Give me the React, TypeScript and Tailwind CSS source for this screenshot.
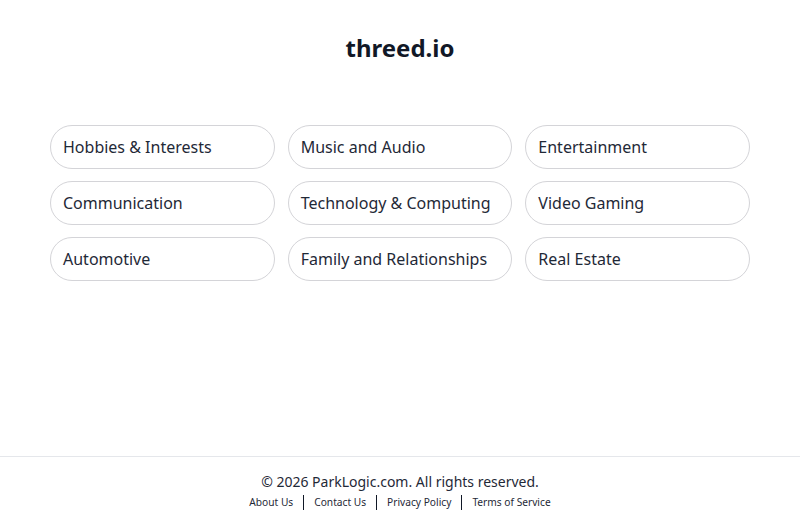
const categories = [
  "Hobbies & Interests",
  "Music and Audio",
  "Entertainment",
  "Communication",
  "Technology & Computing",
  "Video Gaming",
  "Automotive",
  "Family and Relationships",
  "Real Estate",
];

const links = ["About Us", "Contact Us", "Privacy Policy", "Terms of Service"];

export default function App() {
  return (
    <div className="flex min-h-screen flex-col bg-white font-['Noto_Sans',sans-serif] text-[#111827]">
      <main className="flex-1 px-[50px] pt-8">
        <h1 className="text-center text-2xl leading-8 font-bold">threed.io</h1>
        <div className="mt-[61px] grid grid-cols-3 gap-x-[13px] gap-y-3">
          {categories.map((c) => (
            <a
              key={c}
              href="#"
              className="flex h-11 items-center rounded-[22px] border border-[#d4d4d8] px-3 text-base text-[#1f2937]"
            >
              {c}
            </a>
          ))}
        </div>
      </main>
      <footer className="h-[69px] border-t border-[#e5e7eb] pt-[15px] text-center">
        <p className="text-sm leading-5 text-[#1f2937]">
          © 2026 ParkLogic.com. All rights reserved.
        </p>
        <nav className="mt-[2px] flex items-center justify-center text-[10.2px] leading-4 text-[#1f2937]">
          {links.map((l, i) => (
            <span key={l} className="flex items-center">
              {i > 0 && <span className="mx-[10px] h-[15px] w-px bg-[#111827]" />}
              <a href="#">{l}</a>
            </span>
          ))}
        </nav>
      </footer>
    </div>
  );
}
